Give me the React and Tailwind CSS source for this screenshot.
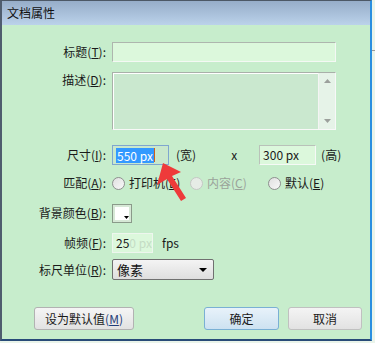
import React from "react";

const font = { fontFamily: '"Noto Sans CJK SC", "Noto Sans", sans-serif' };

function Lbl({ children, className = "" }) {
  return (
    <div className={"w-[104px] shrink-0 text-right text-[12px] text-[#1a1a1a] leading-none " + className}>
      {children}
    </div>
  );
}

function Radio({ label, disabled }) {
  return (
    <div className="flex items-center gap-[4px] whitespace-nowrap">
      <div className={"w-[13px] h-[13px] shrink-0 rounded-full border " + (disabled ? "border-[#c4c8c4] bg-[#e6ece6]" : "border-[#8e8f8f] bg-gradient-to-br from-[#e0e0e0] to-[#f8f8f8]")}></div>
      <span className={"text-[12px] leading-none " + (disabled ? "text-[#9aa39a]" : "text-[#1a1a1a]")}>{label}</span>
    </div>
  );
}

export default function App() {
  return (
    <div className="w-[375px] h-[343px] bg-[#eaf4ea] relative overflow-hidden" style={font}>
      <div className="w-[372px] h-[341px] flex flex-col border-t border-t-[#4c5866] border-l-2 border-l-[#4f5d6e] border-r-2 border-r-[#2a8fe0] border-b-2 border-b-[#284b78] bg-[#c7edcc]">
        {/* title bar */}
        <div className="h-[24px] shrink-0 bg-gradient-to-b from-[#96adc9] to-[#bbd2ea] flex items-center pl-[5px]">
          <span className="text-[12px] text-[#111] leading-none">文档属性</span>
        </div>
        {/* body */}
        <div className="flex flex-col pt-[17px]">
          {/* title row */}
          <div className="flex items-center gap-[6px] h-[20px]">
            <Lbl>标题(<u>T</u>):</Lbl>
            <div className="w-[224px] h-[20px] bg-[#dcf8dc] border border-[#aeb6ae] border-b-[#f4f8f4] border-r-[#f4f8f4]"></div>
          </div>
          {/* desc row */}
          <div className="flex items-start gap-[6px] mt-[10px]">
            <Lbl className="pt-[2px]">描述(<u>D</u>):</Lbl>
            <div className="w-[224px] h-[58px] flex bg-[#cae8cf] border border-[#a9b0a9] border-b-[#f8f8f8] border-r-[#f8f8f8]">
              <div className="flex-1 border-l border-t border-white"></div>
              <div className="w-[17px] flex flex-col items-center justify-between bg-[#e6f3e8] py-[6px] border-l border-[#f4f4f4]">
                <svg width="7" height="4" viewBox="0 0 7 4"><path d="M3.5 0L7 4H0z" fill="#9ca09c" /></svg>
                <svg width="7" height="4" viewBox="0 0 7 4"><path d="M0 0h7L3.5 4z" fill="#9ca09c" /></svg>
              </div>
            </div>
          </div>
          {/* size row */}
          <div className="flex items-center gap-[6px] mt-[15px] h-[20px]">
            <Lbl>尺寸(<u>I</u>):</Lbl>
            <div className="w-[57px] h-[20px] bg-[#c9e8cc] border border-[#7fa6cf] flex items-center pl-[3px]">
              <span className="bg-[#3399ff] text-white text-[12px] leading-[15px] px-[1px]">550 px</span>
              <span className="w-[1px] h-[14px] bg-[#d0601a]"></span>
            </div>
            <span className="text-[12px] text-[#1a1a1a] ml-[1px]">(宽)</span>
            <span className="text-[12px] text-[#1a1a1a] ml-[29px]">x</span>
            <div className="ml-[16px] w-[57px] h-[20px] bg-[#dcf8dc] border border-[#b9c2b9] border-b-[#f6f9f6] border-r-[#f6f9f6] flex items-center pl-[3px]">
              <span className="text-[12px] text-[#1a1a1a] leading-none">300 px</span>
            </div>
            <span className="text-[12px] text-[#1a1a1a] ml-[-1px]">(高)</span>
          </div>
          {/* match row */}
          <div className="flex items-center gap-[6px] mt-[9px] h-[18px]">
            <Lbl>匹配(<u>A</u>):</Lbl>
            <div className="flex items-center shrink-0">
              <div className="w-[78px] shrink-0"><Radio label={<>打印机(<u>E</u>)</>} /></div>
              <div className="w-[78px] shrink-0"><Radio label={<>内容(<u>C</u>)</>} disabled /></div>
              <div className="shrink-0"><Radio label={<>默认(<u>E</u>)</>} /></div>
            </div>
          </div>
          {/* bg color */}
          <div className="flex items-center gap-[6px] mt-[11px] h-[20px]">
            <Lbl>背景颜色(<u>B</u>):</Lbl>
            <div className="w-[20px] h-[19px] border border-[#8a9a8a] bg-[#d6e8d6] p-[2px] relative">
              <div className="w-full h-full bg-white"></div>
              <svg className="absolute right-[2px] bottom-[3px]" width="5" height="3" viewBox="0 0 5 3"><path d="M0 0h5L2.5 3z" fill="#000" /></svg>
            </div>
          </div>
          {/* fps */}
          <div className="flex items-center gap-[6px] mt-[10px] h-[20px]">
            <Lbl>帧频(<u>F</u>):</Lbl>
            <div className="w-[41px] h-[20px] bg-[#dcf8dc] border border-[#eef6ee] flex items-center pl-[3px] overflow-hidden whitespace-nowrap">
              <span className="text-[12px] text-[#1a1a1a] leading-none">25</span>
              <span className="text-[12px] text-[#c4dcc4] leading-none">0 px</span>
            </div>
            <span className="text-[12px] text-[#1a1a1a] ml-[3px]">fps</span>
          </div>
          {/* ruler */}
          <div className="flex items-center gap-[6px] mt-[6px] h-[21px]">
            <Lbl>标尺单位(<u>R</u>):</Lbl>
            <div className="w-[102px] h-[21px] rounded-[2px] border border-[#707070] bg-gradient-to-b from-[#f4f4f4] to-[#dedede] flex items-center justify-between pl-[4px] pr-[6px]">
              <span className="text-[13px] text-[#111] leading-none">像素</span>
              <svg width="8" height="4" viewBox="0 0 8 4"><path d="M0 0h8L4 4z" fill="#000" /></svg>
            </div>
          </div>
          {/* buttons */}
          <div className="flex items-center mt-[27px] h-[23px]">
            <div className="ml-[32px] w-[100px] h-[23px] rounded-[3px] border border-[#b2b2b2] bg-gradient-to-b from-[#f5f5f5] to-[#e2e2e2] flex items-center justify-center">
              <span className="text-[12px] text-[#1a1a1a] leading-none">设为默认值<span className="text-[#1e3c78]">(<u>M</u>)</span></span>
            </div>
            <div className="ml-[70px] w-[75px] h-[23px] rounded-[3px] border border-[#7ab0d4] bg-gradient-to-b from-[#e8f2fa] to-[#cde2f1] flex items-center justify-center">
              <span className="text-[12px] text-[#1a1a1a] leading-none">确定</span>
            </div>
            <div className="ml-[9px] w-[74px] h-[23px] rounded-[3px] border border-[#c0c0c0] bg-gradient-to-b from-[#f4f4f4] to-[#e2e2e2] flex items-center justify-center">
              <span className="text-[12px] text-[#1a1a1a] leading-none">取消</span>
            </div>
          </div>
        </div>
      </div>
      {/* right outside strip line */}
      <div className="absolute left-[372px] top-[50px] w-[3px] h-[1px] bg-[#9a9a9a]"></div>
      {/* red arrow */}
      <svg className="absolute left-0 top-0 pointer-events-none" width="375" height="343" viewBox="0 0 375 343">
        <polygon points="163,163 157,185 167,179 181,201 186,198 172,176 181,172" fill="#ee3a3a" />
      </svg>
    </div>
  );
}
